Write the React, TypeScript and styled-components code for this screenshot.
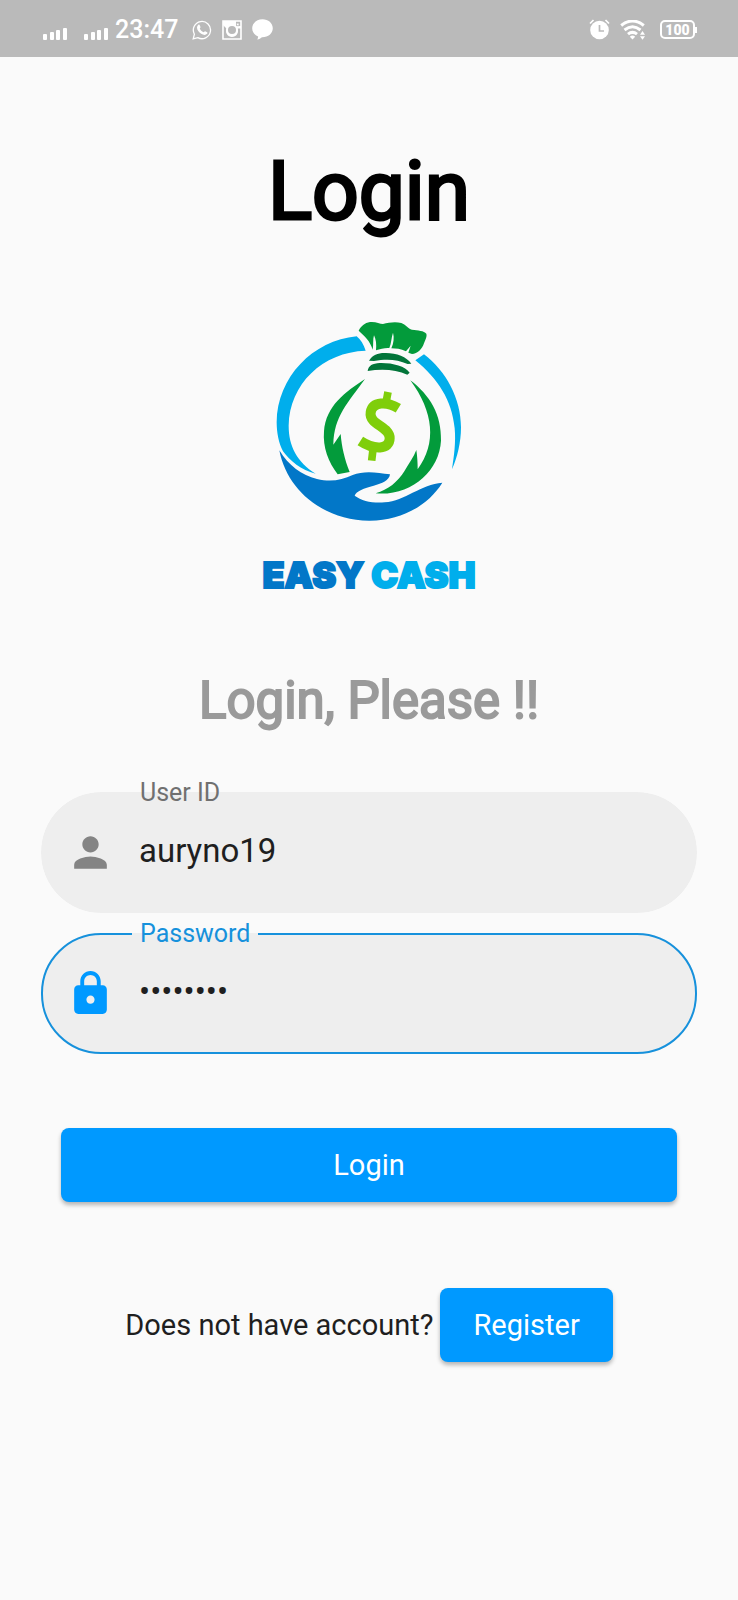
import React, { useState } from "react";
import styled, { createGlobalStyle } from "styled-components";

const blue = "#0099ff";

const GlobalStyle = createGlobalStyle`
  *, *::before, *::after { box-sizing: border-box; }
  body { margin: 0; background: #fafafa; font-family: Roboto, sans-serif; color: #1f1f1f; }
  button, input { font: inherit; }
`;

const StatusBar = styled.header`
  display: flex;
  align-items: center;
  justify-content: space-between;
  height: 57px;
  padding: 2px 41px 0 43px;
  background: #bababa;
  color: #fff;
`;

const StatusGroup = styled.div`
  display: flex;
  align-items: center;
  gap: 10px;
`;

const Signals = styled.div`
  display: flex;
  gap: 16px;
  padding-top: 8px;
`;

const Clock = styled.time`
  margin: 0 4px 0 -4px;
  font-size: 25px;
  line-height: 32px;
  font-weight: 500;
`;

const Battery = styled.div`
  display: flex;
  align-items: center;
  margin-left: 4px;
  &::after {
    content: "";
    width: 2px;
    height: 6px;
    background: #fff;
  }
`;

const BatteryLevel = styled.span`
  display: flex;
  align-items: center;
  justify-content: center;
  width: 35px;
  height: 19px;
  border: 2px solid #fff;
  border-radius: 5px;
  font-size: 14px;
  line-height: 16px;
  font-weight: 900;
`;

const Main = styled.main`
  display: flex;
  flex-direction: column;
  align-items: center;
  padding: 85px 41px 48px;
`;

const Title = styled.h1`
  margin: 0;
  font-size: 82px;
  line-height: 98px;
  font-weight: 400;
  color: #000;
  -webkit-text-stroke: 3px #000;
`;

const Brand = styled.div`
  display: flex;
  flex-direction: column;
  align-items: center;
  margin-top: 80px;
`;

const BrandName = styled.p`
  margin: 27px 0 0;
  font-family: Inter, sans-serif;
  font-size: 36px;
  line-height: 48px;
  font-weight: 900;
  color: #00aeec;
  -webkit-text-stroke: 2px currentColor;
`;

const BrandFirst = styled.span`
  color: #0277c8;
`;

const Subtitle = styled.h2`
  margin: 72px 0 0;
  font-size: 51px;
  line-height: 60px;
  font-weight: 400;
  color: #9a9a9a;
  -webkit-text-stroke: 2px currentColor;
`;

const Form = styled.form`
  display: flex;
  flex-direction: column;
  align-self: stretch;
  gap: 7px;
  margin-top: 48px;
`;

const Field = styled.fieldset<{ $active?: boolean }>`
  min-width: 0;
  margin: 0;
  padding: 0;
  border: 2px solid ${(p) => (p.$active ? "#1691dc" : "transparent")};
  border-radius: 60px;
  background: #eeeeee;
  color: ${(p) => (p.$active ? blue : "#848484")};
`;

const Legend = styled.legend<{ $active?: boolean }>`
  margin-left: 89px;
  padding: 0 8px;
  font-size: 25px;
  line-height: 28px;
  color: ${(p) => (p.$active ? "#1691dc" : "#707070")};
`;

const FieldRow = styled.div`
  display: flex;
  align-items: center;
  gap: 24px;
  height: 104px;
  padding: 0 40px 14px 23px;
`;

const TextInput = styled.input`
  flex: 1;
  min-width: 0;
  height: 48px;
  padding: 0 0 4px;
  border: 0;
  outline: 0;
  background: transparent;
  font-size: 33px;
  color: #1f1f1f;
`;

const Button = styled.button`
  height: 74px;
  padding: 0 33px;
  border: 0;
  border-radius: 8px;
  background: ${blue};
  box-shadow: 0 3px 4px rgba(0, 0, 0, 0.28);
  color: #fff;
  font-size: 29px;
  line-height: 34px;
`;

const SubmitButton = styled(Button)`
  margin: 67px 20px 0;
`;

const RegisterRow = styled.div`
  display: flex;
  flex-wrap: wrap;
  align-items: center;
  justify-content: center;
  gap: 7px;
  margin-top: 86px;
  font-size: 29px;
  line-height: 34px;
`;

const SignalIcon = () => (
  <svg width="25" height="12" viewBox="0 0 25 12" fill="#fff" aria-hidden="true">
    <rect x="0" y="6" width="4" height="6" rx="1" />
    <rect x="7" y="4" width="4" height="8" rx="1" />
    <rect x="13" y="2" width="4" height="10" rx="1" />
    <rect x="20" y="0" width="4" height="12" rx="1" />
  </svg>
);

const WhatsappIcon = () => (
  <svg width="20" height="20" viewBox="0 0 20 20" fill="none" aria-hidden="true">
    <path d="M1.2 18.8 2.4 14.2A8.6 8.6 0 1 1 5.8 17.6Z" stroke="#fff" strokeWidth="1.3" />
    <path d="M6.2 4.9c.5-.5 1.1-.4 1.4.1l.9 2c.2.5-.7 1.2-.7 1.6.7 1.7 2 2.9 3.7 3.6.5.1 1.1-1.1 1.6-1l2 1c.6.3.4 1.1 0 1.6-1.5 1.7-3.9 1.2-5.9-.1-2.4-1.6-4.1-3.7-4.2-6 0-1.1.5-2.2 1.2-2.8Z" fill="#fff" />
  </svg>
);

const CameraIcon = () => (
  <svg width="20" height="20" viewBox="0 0 20 20" fill="none" aria-hidden="true">
    <path d="M1 1H19V19H1Z" stroke="#fff" strokeWidth="1.6" />
    <path d="M1 1H14V6H19V8.5H15.5A6 6 0 1 1 4.5 8.5L1 5Z" fill="#fff" />
    <circle cx="10" cy="10" r="5" fill="#bababa" stroke="#fff" strokeWidth="2" />
    <path d="M14.5 3.2H17V5.7H14.5Z" fill="#fff" stroke="#bababa" strokeWidth=".7" />
  </svg>
);

const ChatIcon = () => (
  <svg width="21" height="21" viewBox="0 0 21 21" fill="#fff" aria-hidden="true">
    <path d="M10.5.3C4.7.3.2 4.2.2 9.3c0 3.8 2.5 6.8 5.9 8.2.1 1.2-.3 2.2-.9 3.1 2-.2 3.5-1.2 4.7-2.3 6.2.2 10.9-3.8 10.9-9C20.8 4.2 16.3.3 10.5.3Z" />
  </svg>
);

const AlarmIcon = () => (
  <svg width="21" height="21" viewBox="0 0 21 21" fill="none" aria-hidden="true">
    <circle cx="10.5" cy="11" r="9.3" fill="#fff" />
    <path d="M1 4.5 4.5 1M16.5 1 20 4.5" stroke="#fff" strokeWidth="1.7" />
    <path d="M10.5 6V12H15" stroke="#bababa" strokeWidth="1.7" />
  </svg>
);

const WifiIcon = () => (
  <svg width="26" height="20" viewBox="0 0 26 20" fill="none" aria-hidden="true">
    <path d="M1.2 5.5Q12.5-3.5 23.8 5.5M4.5 10Q12.5 3.5 20.5 10M8 14.2Q12.5 10.5 17 14.2" stroke="#fff" strokeWidth="3" />
    <path d="M9.8 16.7a4 4 0 0 1 5.4 0L12.5 19.5ZM20 14.7 22.5 11 25 14.7ZM20 16.2H25L22.5 19.7Z" fill="#fff" />
  </svg>
);

const PersonIcon = () => (
  <svg width="49" height="49" viewBox="0 0 24 24" fill="currentColor" aria-hidden="true">
    <path d="M12 12c2.21 0 4-1.79 4-4s-1.79-4-4-4-4 1.79-4 4 1.79 4 4 4zm0 2c-2.67 0-8 1.34-8 4v2h16v-2c0-2.66-5.33-4-8-4z" />
  </svg>
);

const LockIcon = () => (
  <svg width="49" height="49" viewBox="0 0 24 24" fill="currentColor" aria-hidden="true">
    <path d="M18 8h-1V6c0-2.76-2.24-5-5-5S7 3.24 7 6v2H6c-1.1 0-2 .9-2 2v10c0 1.1.9 2 2 2h12c1.1 0 2-.9 2-2V10c0-1.1-.9-2-2-2zm-6 9c-1.1 0-2-.9-2-2s.9-2 2-2 2 .9 2 2-.9 2-2 2zm3.1-9H8.9V6c0-1.71 1.39-3.1 3.1-3.1 1.71 0 3.1 1.39 3.1 3.1v2z" />
  </svg>
);

/* Money bag resting on an open hand inside a broken ring. */
const BagLogo = () => (
  <svg width="240" height="204" viewBox="-2 60 720 612" aria-hidden="true">
    <g fill="#00aeec">
      <path d="M321 109C190 121 82 232 81 367C81 397 87 430 100 454C121 483 154 510 198 521C142 486 117 438 117 377C119 252 219 156 348 152C342 134 333 118 321 109Z" />
      <path d="M497 181L523 163C589 213 634 296 634 382C634 428 623 472 607 508C613 469 619 428 615 385C607 300 565 237 497 181Z" />
    </g>
    <path fill="#0277c8" d="M89 451C117 497 156 526 202 537C244 547 277 540 309 525C342 511 382 517 421 523C419 541 397 551 372 557C343 564 320 573 315 587C337 603 369 610 405 607C466 602 514 553 578 548C535 617 453 663 358 662C226 661 113 576 89 451Z" />
    <g fill="#039b3b">
      <path d="M327 92C334 79 345 68 361 66C378 64 390 72 400 72C418 67 438 64 455 69C468 74 475 86 487 89C505 91 523 92 530 101C533 110 526 121 523 130C518 147 503 162 487 162L476 158L483 137L469 154C453 146 439 146 425 145C432 130 434 112 430 98C425 112 425 130 419 144C405 143 392 147 379 151C381 133 379 119 373 106C369 119 372 134 369 149C362 123 344 108 327 92Z" />
      <path d="M346 237C295 309 253 347 251 434L273 402C276 439 284 476 300 516L264 523C236 486 219 443 223 394C229 317 287 276 346 237Z" />
      <path d="M482 241C541 286 576 344 574 422C569 514 484 589 378 580C415 570 445 545 464 514C478 490 492 471 500 450C503 470 504 490 504 508C562 430 552 336 482 241Z" />
    </g>
    <g fill="#02753a">
      <path d="M358 182C369 165 383 159 405 159C438 158 471 170 485 191L474 192C443 178 411 176 373 183Z" />
      <path d="M354 213C356 197 369 190 390 189C427 188 467 198 480 218L473 224C439 208 395 206 354 213Z" />
    </g>
    <path
      fill="none"
      stroke="#7fce0b"
      strokeWidth="30"
      d="M446 325C412 304 369 304 363 337C357 374 422 380 420 415C420 450 373 450 332 423"
    />
    <path fill="none" stroke="#7fce0b" strokeWidth="23" d="M415 276L409 308M371 440L366 482" />
  </svg>
);

export default function App() {
  const [userId, setUserId] = useState("auryno19");
  const [password, setPassword] = useState("password");

  return (
    <>
      <GlobalStyle />
      <StatusBar>
        <StatusGroup>
          <Signals>
            <SignalIcon />
            <SignalIcon />
          </Signals>
          <Clock>23:47</Clock>
          <WhatsappIcon />
          <CameraIcon />
          <ChatIcon />
        </StatusGroup>
        <StatusGroup>
          <AlarmIcon />
          <WifiIcon />
          <Battery>
            <BatteryLevel>100</BatteryLevel>
          </Battery>
        </StatusGroup>
      </StatusBar>
      <Main>
        <Title>Login</Title>
        <Brand>
          <BagLogo />
          <BrandName>
            <BrandFirst>EASY</BrandFirst> CASH
          </BrandName>
        </Brand>
        <Subtitle>Login, Please !!</Subtitle>
        <Form onSubmit={(e) => e.preventDefault()}>
          <Field>
            <Legend>
              <label htmlFor="user-id">User ID</label>
            </Legend>
            <FieldRow>
              <PersonIcon />
              <TextInput id="user-id" value={userId} onChange={(e) => setUserId(e.target.value)} />
            </FieldRow>
          </Field>
          <Field $active>
            <Legend $active>
              <label htmlFor="password">Password</label>
            </Legend>
            <FieldRow>
              <LockIcon />
              <TextInput
                id="password"
                type="password"
                value={password}
                onChange={(e) => setPassword(e.target.value)}
              />
            </FieldRow>
          </Field>
          <SubmitButton type="submit">Login</SubmitButton>
        </Form>
        <RegisterRow>
          <span>Does not have account?</span>
          <Button type="button">Register</Button>
        </RegisterRow>
      </Main>
    </>
  );
}
